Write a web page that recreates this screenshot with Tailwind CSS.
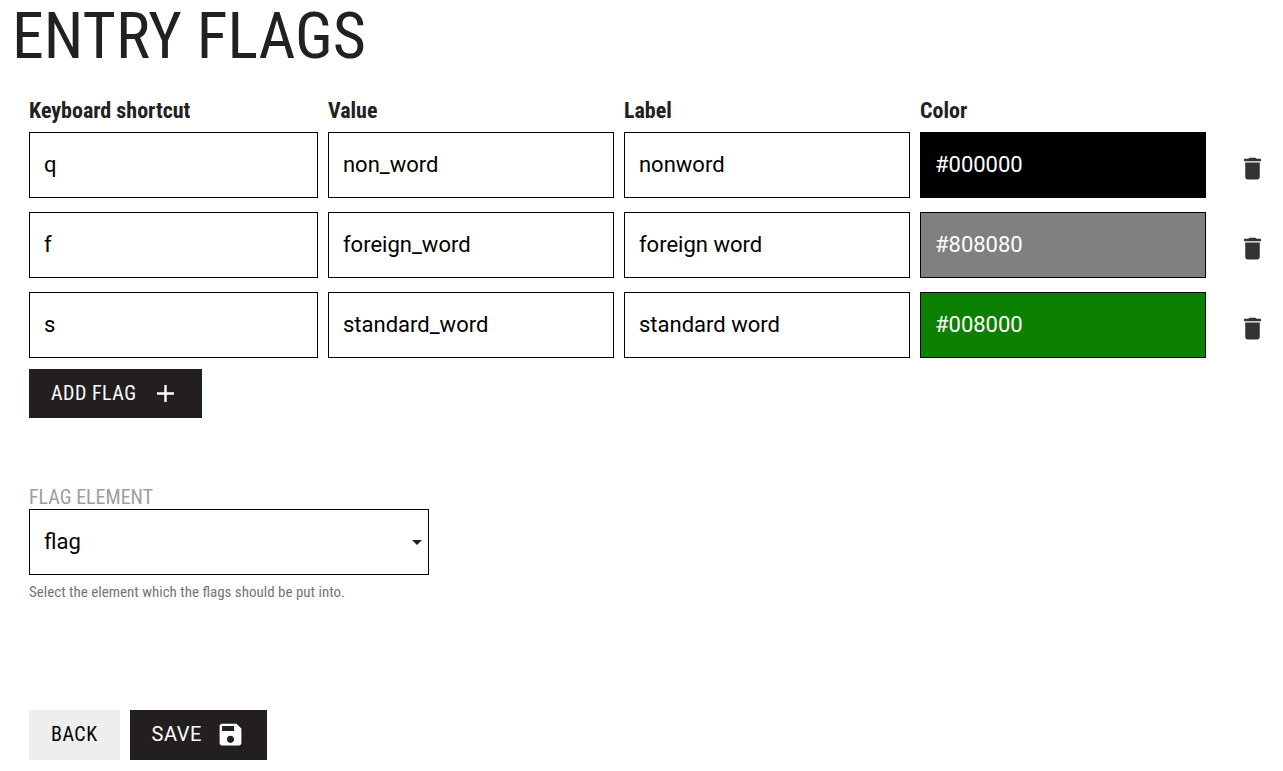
<!DOCTYPE html>
<html lang="en">
<head>
<meta charset="utf-8">
<meta name="viewport" content="width=device-width, initial-scale=1">
<title>Entry flags</title>
<script src="https://cdn.jsdelivr.net/npm/@tailwindcss/browser@4"></script>
</head>
<body class="bg-white font-['Roboto_Condensed',Roboto,sans-serif] text-[22px] text-[#212121]">
<svg class="hidden" aria-hidden="true">
  <symbol id="trash" viewBox="0 0 24 24"><path d="M6 19c0 1.1.9 2 2 2h8c1.1 0 2-.9 2-2V7H6v12zM19 4h-3.5l-1-1h-5l-1 1H5v2h14V4z"/></symbol>
</svg>
<main class="pr-4 pl-[29px]">
  <h1 class="-ml-[17px] text-[64px] leading-[74px] uppercase">Entry flags</h1>
  <form>
    <table class="mt-[22px] w-full table-fixed border-collapse text-left">
      <thead>
        <tr class="leading-[30px] font-bold">
          <th id="h-key" scope="col" class="w-[24.15%] p-0 pb-1.5">Keyboard shortcut</th>
          <th id="h-value" scope="col" class="p-0 pb-1.5">Value</th>
          <th id="h-label" scope="col" class="p-0 pb-1.5">Label</th>
          <th id="h-color" scope="col" class="p-0 pb-1.5">Color</th>
          <td class="w-[51px] p-0"></td>
        </tr>
      </thead>
      <tbody class="font-[Roboto,sans-serif] align-top text-black">
        <tr>
          <td class="pr-2.5 pb-3.5"><input aria-labelledby="h-key" value="q" class="block h-[66px] w-full border border-black bg-white px-3.5 pb-0.5"></td>
          <td class="pr-2.5 pb-3.5"><input aria-labelledby="h-value" value="non_word" class="block h-[66px] w-full border border-black bg-white px-3.5 pb-0.5"></td>
          <td class="pr-2.5 pb-3.5"><input aria-labelledby="h-label" value="nonword" class="block h-[66px] w-full border border-black bg-white px-3.5 pb-0.5"></td>
          <td class="pr-2.5 pb-3.5"><input aria-labelledby="h-color" value="#000000" class="block h-[66px] w-full border border-black bg-black px-3.5 pb-0.5 text-white"></td>
          <td><button type="button" aria-label="Delete non_word" class="flex h-[66px] w-full items-center justify-end pt-1.5"><svg class="size-[29px] fill-[#333]"><use href="#trash"/></svg></button></td>
        </tr>
        <tr>
          <td class="pr-2.5 pb-3.5"><input aria-labelledby="h-key" value="f" class="block h-[66px] w-full border border-black bg-white px-3.5 pb-0.5"></td>
          <td class="pr-2.5 pb-3.5"><input aria-labelledby="h-value" value="foreign_word" class="block h-[66px] w-full border border-black bg-white px-3.5 pb-0.5"></td>
          <td class="pr-2.5 pb-3.5"><input aria-labelledby="h-label" value="foreign word" class="block h-[66px] w-full border border-black bg-white px-3.5 pb-0.5"></td>
          <td class="pr-2.5 pb-3.5"><input aria-labelledby="h-color" value="#808080" class="block h-[66px] w-full border border-black bg-[#808080] px-3.5 pb-0.5 text-white"></td>
          <td><button type="button" aria-label="Delete foreign_word" class="flex h-[66px] w-full items-center justify-end pt-1.5"><svg class="size-[29px] fill-[#333]"><use href="#trash"/></svg></button></td>
        </tr>
        <tr>
          <td class="pr-2.5"><input aria-labelledby="h-key" value="s" class="block h-[66px] w-full border border-black bg-white px-3.5 pb-0.5"></td>
          <td class="pr-2.5"><input aria-labelledby="h-value" value="standard_word" class="block h-[66px] w-full border border-black bg-white px-3.5 pb-0.5"></td>
          <td class="pr-2.5"><input aria-labelledby="h-label" value="standard word" class="block h-[66px] w-full border border-black bg-white px-3.5 pb-0.5"></td>
          <td class="pr-2.5"><input aria-labelledby="h-color" value="#008000" class="block h-[66px] w-full border border-black bg-[#0c8000] px-3.5 pb-0.5 text-white"></td>
          <td><button type="button" aria-label="Delete standard_word" class="flex h-[66px] w-full items-center justify-end pt-1.5"><svg class="size-[29px] fill-[#333]"><use href="#trash"/></svg></button></td>
        </tr>
      </tbody>
    </table>
    <button type="button" class="mt-[11px] flex h-[49px] items-center gap-3.5 bg-[#231f20] px-[22px] text-[20px] tracking-wide text-white uppercase"><span class="pb-0.5">Add flag</span>
      <svg class="size-[29px] fill-white" viewBox="0 0 24 24"><path d="M19 13h-6v6h-2v-6H5v-2h6V5h2v6h6v2z"/></svg>
    </button>

    <div class="mt-[67px] w-[400px] max-w-full">
      <label for="flag-element" class="block text-[20px] leading-6 text-[#9e9e9e] uppercase">Flag element</label>
      <div class="relative">
        <select id="flag-element" class="block h-[66px] w-full appearance-none border border-black bg-white px-3.5 pb-0.5 font-[Roboto,sans-serif] text-black"><option>flag</option></select>
        <svg class="pointer-events-none absolute top-[21px] right-0 size-6 fill-[#212121]" viewBox="0 0 24 24"><path d="M7 10l5 5 5-5z"/></svg>
      </div>
      <p class="mt-[5px] text-[15px] leading-6 text-[#757575]">Select the element which the flags should be put into.</p>
    </div>

    <div class="mt-[106px] flex gap-2.5 text-[20px] tracking-wide">
      <button type="button" class="h-[50px] bg-[#eee] px-[22px] pb-0.5 text-black uppercase">Back</button>
      <button type="submit" class="flex h-[50px] items-center gap-3.5 bg-[#231f20] px-[22px] pb-0.5 font-[Roboto,sans-serif] text-white uppercase">Save
        <svg class="size-[29px] fill-white" viewBox="0 0 24 24"><path d="M17 3H5c-1.11 0-2 .9-2 2v14c0 1.1.89 2 2 2h14c1.1 0 2-.9 2-2V7l-4-4zm-5 16c-1.66 0-3-1.34-3-3s1.34-3 3-3 3 1.34 3 3-1.34 3-3 3zm3-10H5V5h10v4z"/></svg>
      </button>
    </div>
  </form>
</main>
</body>
</html>
